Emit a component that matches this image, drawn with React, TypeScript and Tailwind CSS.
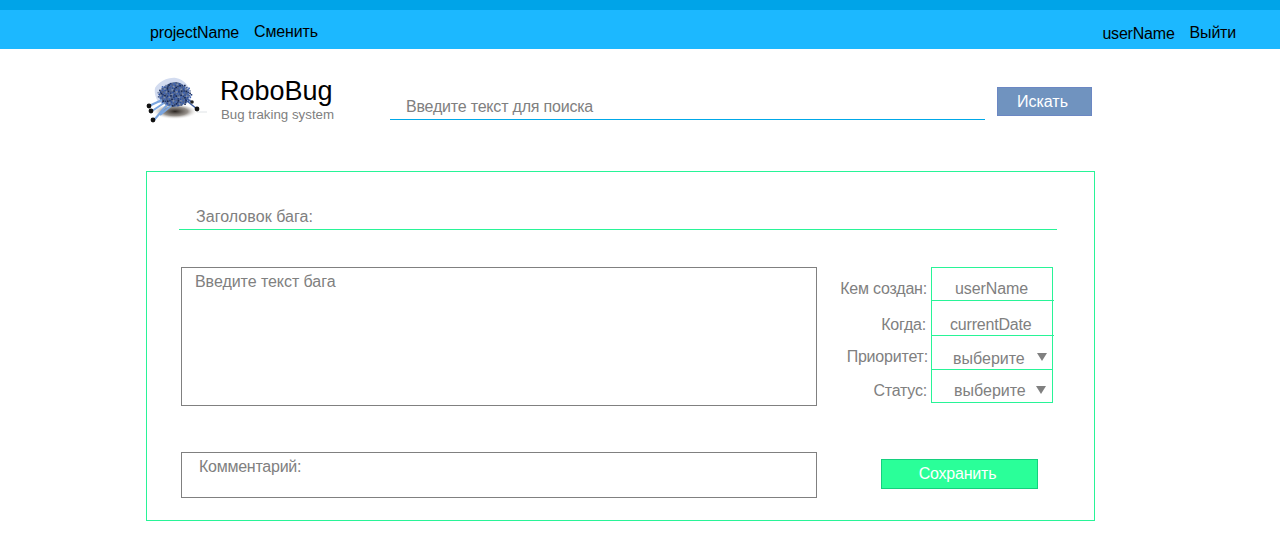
const sans = "font-['Liberation_Sans',Arial,sans-serif]";

// speckle for the bug's circuit-board body
const speckle = Array.from({ length: 150 }, (_, i) => {
  const a = (i * 137.5 * Math.PI) / 180;
  const r = Math.sqrt(i / 150);
  const colors = ["#1f3a7a", "#2c4f9e", "#4a5f8a", "#16264f", "#8190ad", "#3d63b5"];
  return {
    x: 29 + Math.cos(a) * r * 17,
    y: 19 + Math.sin(a) * r * 12,
    c: colors[i % colors.length],
  };
});

function BugLogo() {
  return (
    <svg width="66" height="54" viewBox="0 0 66 54" className="shrink-0">
      <defs>
        <radialGradient id="shadow" cx="50%" cy="40%" r="50%">
          <stop offset="0%" stopColor="#2a2420" />
          <stop offset="55%" stopColor="#7d766f" stopOpacity="0.8" />
          <stop offset="100%" stopColor="#ffffff" stopOpacity="0" />
        </radialGradient>
      </defs>
      <ellipse cx="30" cy="38" rx="23" ry="8" fill="url(#shadow)" />
      <path d="M52 37 L62 37" stroke="#dfe3e6" strokeWidth="1" />
      <path d="M10 13 C14 6 24 2 31 3 C39 4 45 12 46 19 L46 28 L14 28 C11 24 9 18 10 13 Z" fill="#d3dcf0" />
      <path d="M14 20 C16 12 24 7 31 7 C38 8 43 14 44 20 C44 26 38 32 29 32 C21 32 15 27 14 20 Z" fill="#5a6f98" />
      {speckle.map((s, i) => (
        <rect key={i} x={s.x} y={s.y} width="1.6" height="1.6" fill={s.c} />
      ))}
      <path d="M17 25 L4 31 M19 28 L7 36 M22 30 L9 45 M26 31 L15 40" stroke="#7ba6e0" strokeWidth="2" />
      <path d="M42 26 L52 34 M41 23 L47 27" stroke="#3f5fa0" strokeWidth="1.5" />
      <circle cx="4" cy="31" r="2.4" fill="#111" />
      <circle cx="6" cy="36" r="2.4" fill="#111" />
      <circle cx="8" cy="45" r="2.4" fill="#111" />
      <circle cx="52" cy="34" r="2.4" fill="#111" />
      <circle cx="47" cy="27" r="1.8" fill="#222" />
    </svg>
  );
}

type RowProps = {
  label: string;
  value: string;
  select?: boolean;
  rowClass: string;
  labelClass: string;
  valueClass: string;
  arrowClass?: string;
  tick?: boolean;
};

function MetaRow({ label, value, select, rowClass, labelClass, valueClass, arrowClass, tick }: RowProps) {
  return (
    <div className={`flex ${rowClass}`}>
      <div className={`w-[115px] text-right tracking-[-0.2px] ${labelClass}`}>{label}</div>
      <div className={`relative w-[122px] border-x border-t border-[#28f497] ${valueClass}`}>
        {value}
        {tick && <span className="absolute -right-[2px] -top-px h-px w-px bg-[#28f497]" />}
        {select && <span className={`absolute h-0 w-0 border-x-[5px] border-t-[8px] border-x-transparent border-t-[#808080] ${arrowClass}`} />}
      </div>
    </div>
  );
}

export default function App() {
  return (
    <div className={`min-h-screen bg-white text-base text-[#808080] ${sans}`}>
      <div className="h-[10px] bg-[#00a4e8]" />
      <nav className="flex h-[39px] justify-between bg-[#1cb8ff] pl-[150px] pr-[44px] text-black">
        <div className="flex gap-[15px] pt-[11px]">
          <span className="tracking-[-0.15px]">projectName</span>
          <span className="-mt-px tracking-[-0.15px]">Сменить</span>
        </div>
        <div className="flex gap-[15px] pt-[12px]">
          <span className="tracking-[-0.2px]">userName</span>
          <span className="-mt-px tracking-[-0.2px]">Выйти</span>
        </div>
      </nav>

      <div className="ml-[146px] w-[949px]">
        <header className="flex h-[122px] items-start">
          <div className="-ml-px mt-[26px]">
            <BugLogo />
          </div>
          <div className="ml-[10px] mt-[26px] w-[169px]">
            <div className="-ml-px text-[27px] leading-[32px] text-black">RoboBug</div>
            <div className="text-[13.3px] leading-[15px]">Bug traking system</div>
          </div>
          <div className="mt-[47px] h-[24px] w-[595px] border-b border-[#00a8e8] pl-4 leading-[21px] tracking-[-0.2px]">Введите текст для поиска</div>
          <button className="ml-3 mt-[38px] h-[29px] w-[95px] border border-[#6b87c3] bg-[#7093bf] pr-[4px] text-white">Искать</button>
        </header>

        <main className="h-[350px] border border-[#28f497] pl-[32px] pr-[37px] pt-[35px]">
          <div className="h-[23px] border-b border-[#28f497] pl-[17px] leading-[20px] tracking-[0.05px]">Заголовок бага:</div>

          <div className="mt-[37px] flex">
            <div className="ml-[2px] h-[139px] w-[636px] border border-[#808080] pl-[13px] leading-[28px] tracking-[-0.05px]">Введите текст бага</div>
            <div className="-ml-[1px] w-[237px]">
              <MetaRow label="Кем создан:" value="userName" rowClass="h-[33px]" labelClass="pr-[4px] leading-[44px]" valueClass="pl-[23px] leading-[42px] tracking-[-0.1px]" />
              <MetaRow label="Когда:" value="currentDate" rowClass="h-[35px]" labelClass="pr-[5px] leading-[50px]" valueClass="pl-[18px] leading-[48px] tracking-[-0.2px]" tick />
              <MetaRow label="Приоритет:" value="выберите" select rowClass="h-[34px]" labelClass="pr-[3px] leading-[44px]" valueClass="pl-[21px] leading-[46px]" arrowClass="right-[5px] top-[17px]" tick />
              <MetaRow label="Статус:" value="выберите" select rowClass="h-[33px]" labelClass="pr-[4px] leading-[44px]" valueClass="pl-[22px] leading-[42px]" arrowClass="right-[6px] top-[16px]" />
              <div className="ml-[115px] h-px w-[122px] bg-[#28f497]" />
            </div>
          </div>

          <div className="mt-[46px] flex items-start">
            <div className="ml-[2px] h-[46px] w-[636px] border border-[#808080] pl-[17px] leading-[28px] tracking-[-0.25px]">Комментарий:</div>
            <button className="ml-[64px] mt-[7px] h-[30px] w-[157px] border border-[#14d07e] bg-[#2aff99] pr-[4px] tracking-[-0.2px] text-white">Сохранить</button>
          </div>
        </main>
      </div>
    </div>
  );
}
